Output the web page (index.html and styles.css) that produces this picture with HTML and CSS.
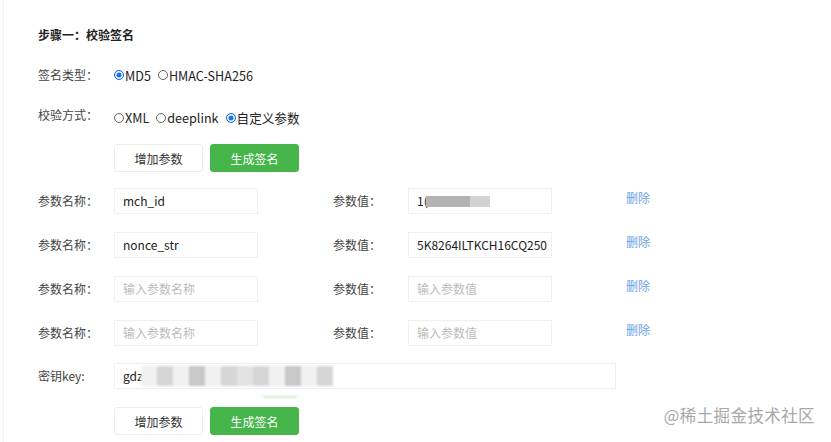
FILE: index.html
```html
<!DOCTYPE html>
<html lang="zh">
<head>
<meta charset="utf-8">
<link rel="stylesheet" href="styles.css">
</head>
<body>
<div class="page">
  <div class="side-line"></div>
  <div class="content">
    <h3 class="title">步骤一：校验签名</h3>

    <div class="line type-line">
      <span class="label">签名类型：</span>
      <span class="radios">
        <span class="radio checked"></span><span class="rtext">MD5</span>
        <span class="radio"></span><span class="rtext">HMAC-SHA256</span>
      </span>
    </div>

    <div class="line mode-line">
      <span class="label">校验方式：</span>
      <span class="radios">
        <span class="radio"></span><span class="rtext">XML</span>
        <span class="radio"></span><span class="rtext">deeplink</span>
        <span class="radio checked"></span><span class="rtext">自定义参数</span>
      </span>
    </div>

    <div class="btns">
      <button class="btn">增加参数</button>
      <button class="btn primary">生成签名</button>
    </div>

    <div class="param">
      <span class="label">参数名称：</span>
      <div class="field">mch_id</div>
      <span class="label vlabel">参数值：</span>
      <div class="field">1(<span class="mask dark"></span><span class="mask light"></span></div>
      <a class="del">删除</a>
    </div>
    <div class="param">
      <span class="label">参数名称：</span>
      <div class="field">nonce_str</div>
      <span class="label vlabel">参数值：</span>
      <div class="field">5K8264ILTKCH16CQ250</div>
      <a class="del">删除</a>
    </div>
    <div class="param">
      <span class="label">参数名称：</span>
      <div class="field ph">输入参数名称</div>
      <span class="label vlabel">参数值：</span>
      <div class="field ph">输入参数值</div>
      <a class="del">删除</a>
    </div>
    <div class="param">
      <span class="label">参数名称：</span>
      <div class="field ph">输入参数名称</div>
      <span class="label vlabel">参数值：</span>
      <div class="field ph">输入参数值</div>
      <a class="del">删除</a>
    </div>

    <div class="param key">
      <span class="label">密钥key:</span>
      <div class="field wide">gdz<span class="mosaic"><i class="m1"></i><i class="m2"></i><i class="m1"></i><i class="m3"></i><i class="m1"></i><i class="m2"></i><i class="m4"></i><i class="m2"></i><i class="m1"></i><i class="m3"></i><i class="m1"></i><i class="m2"></i></span></div>
    </div>
    <div class="smudge"></div>

    <div class="btns last">
      <button class="btn">增加参数</button>
      <button class="btn primary">生成签名</button>
    </div>
  </div>
  <div class="watermark">@稀土掘金技术社区</div>
</div>
</body>
</html>
```

FILE: styles.css
```css
html, body {
  margin: 0;
  padding: 0;
  background: #fff;
}
body {
  width: 831px;
  height: 442px;
  overflow: hidden;
  font-family: "Noto Sans CJK SC", "Open Sans", sans-serif;
  font-size: 12px;
  color: #333;
}
.page {
  position: relative;
  display: flex;
  height: 442px;
}
.side-line {
  width: 3px;
  border-right: 1px solid #f3f3f3;
  flex: none;
}
.content {
  padding: 26px 0 0 34px;
  flex: 1;
}
.title {
  margin: 0;
  font-size: 12px;
  font-weight: bold;
  line-height: 18px;
  height: 18px;
  color: #222;
}
.line {
  display: flex;
  align-items: center;
  height: 20px;
}
.type-line {
  margin-top: 21px;
}
.mode-line {
  margin-top: 20px;
}
.label {
  width: 76px;
  flex: none;
  color: #444;
  line-height: 20px;
}
.radios {
  display: flex;
  align-items: center;
  font-size: 12.6px;
  color: #222;
}
.mode-line .radios {
  margin-top: 5px;
}
.radio {
  width: 8px;
  height: 8px;
  border: 1px solid #666;
  border-radius: 50%;
  box-sizing: content-box;
  margin-right: 1px;
  position: relative;
}
.radio.checked {
  border-color: #1a73e8;
  background: #1a73e8;
  box-shadow: inset 0 0 0 1.5px #fff;
  border-width: 1px;
}
.rtext {
  margin-right: 7px;
}
.btns {
  display: flex;
  gap: 7px;
  margin-top: 19px;
  margin-left: 76px;
}
.btn {
  width: 89px;
  height: 28px;
  border: 1px solid #ececec;
  border-radius: 3px;
  background: #fff;
  font-family: inherit;
  font-size: 12px;
  color: #333;
  padding: 0;
}
.btn.primary {
  background: #45b549;
  border-color: #45b549;
  color: #fff;
}
.param {
  display: flex;
  align-items: center;
  height: 26px;
  margin-top: 18px;
}
.btns + .param {
  margin-top: 16px;
}
.field {
  width: 144px;
  height: 26px;
  box-sizing: border-box;
  border: 1px solid #efefef;
  padding: 0 8px;
  line-height: 24px;
  color: #222;
  display: flex;
  align-items: center;
  white-space: nowrap;
  overflow: hidden;
  flex: none;
}
.field.ph {
  color: #bbb;
}
.field.wide {
  width: 502px;
}
.vlabel {
  margin-left: 75px;
  width: 75px;
}
.del {
  margin-left: 74px;
  color: #6aa3e6;
  align-self: flex-start;
  line-height: 20px;
  margin-top: 0;
}
.mask {
  display: inline-block;
  height: 11px;
  filter: blur(0.6px);
}
.mask.dark {
  width: 44px;
  background: #b3b3b3;
  margin-left: -2px;
}
.mask.light {
  width: 20px;
  background: #d2d2d2;
}
.mosaic {
  display: flex;
  height: 20px;
  margin-left: -2px;
  filter: blur(1.2px);
}
.mosaic i {
  display: block;
  width: 16px;
  height: 20px;
}
.mosaic .m1 { background: #f1f1f1; }
.mosaic .m2 { background: #d6d6d6; }
.mosaic .m3 { background: #c8c8c8; }
.mosaic .m4 { background: #e3e3e3; }
.key {
  margin-top: 17px;
}
.smudge {
  margin: 7px 0 0 225px;
  width: 34px;
  height: 2px;
  background: #cfe9d0;
  filter: blur(1px);
}
.btns.last {
  margin-top: 9px;
}
.watermark {
  position: absolute;
  right: 16px;
  top: 403px;
  font-size: 16.5px;
  color: #a8a8a8;
  letter-spacing: 0.4px;
}
```
